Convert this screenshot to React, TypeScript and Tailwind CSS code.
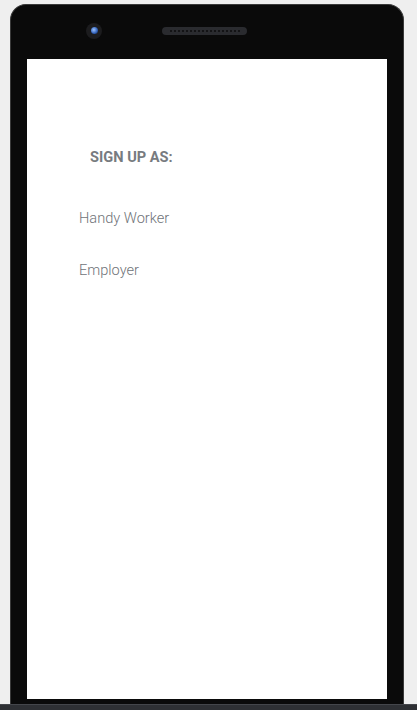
import React from 'react';

export default function App() {
  return (
    <div className="h-[710px] w-[417px] overflow-hidden bg-[#efefef] flex flex-col" style={{ fontFamily: 'Roboto, "Liberation Sans", sans-serif' }}>
      {/* Phone body */}
      <div className="ml-[10px] mr-[13px] mt-[4px] flex-1 flex flex-col rounded-t-[16px] border border-b-0 border-[#3a3a3a] bg-[#0a0a0a]">
        {/* Top bezel */}
        <div className="h-[54px] shrink-0 flex items-center pl-[75px] pb-[3px]">
          <div className="w-[16px] h-[16px] rounded-full bg-[#1c1c1e] flex items-center justify-center">
            <div className="w-[7px] h-[7px] rounded-full bg-[radial-gradient(circle_at_40%_40%,#9cc3ff,#2f5fb8_60%,#0d1a33)]" />
          </div>
          <div className="ml-[60px] w-[85px] h-[8px] rounded-full bg-[#2a2b2f] flex items-center justify-center gap-[2px] px-[6px]">
            {Array.from({ length: 18 }).map((_, i) => (
              <span key={i} className="w-[2px] h-[2px] rounded-full bg-[#0c0c0e]" />
            ))}
          </div>
        </div>

        {/* Screen */}
        <div className="mx-[16px] h-[640px] bg-white shrink-0">
          <div className="pt-[89px] pl-[63px] text-[14.6px] font-bold text-[#777b80] leading-[18px]">
            SIGN UP AS:
          </div>
          <div className="pl-[52px] pt-[43px] flex flex-col gap-[34px] text-[14.6px] font-light text-[#6f7378] leading-[18px]">
            <span>Handy Worker</span>
            <span>Employer</span>
          </div>
        </div>
      </div>

      {/* Bottom bar */}
      <div className="h-[6px] shrink-0 bg-[#2e3034] border-t border-[#44464b]" />
    </div>
  );
}
